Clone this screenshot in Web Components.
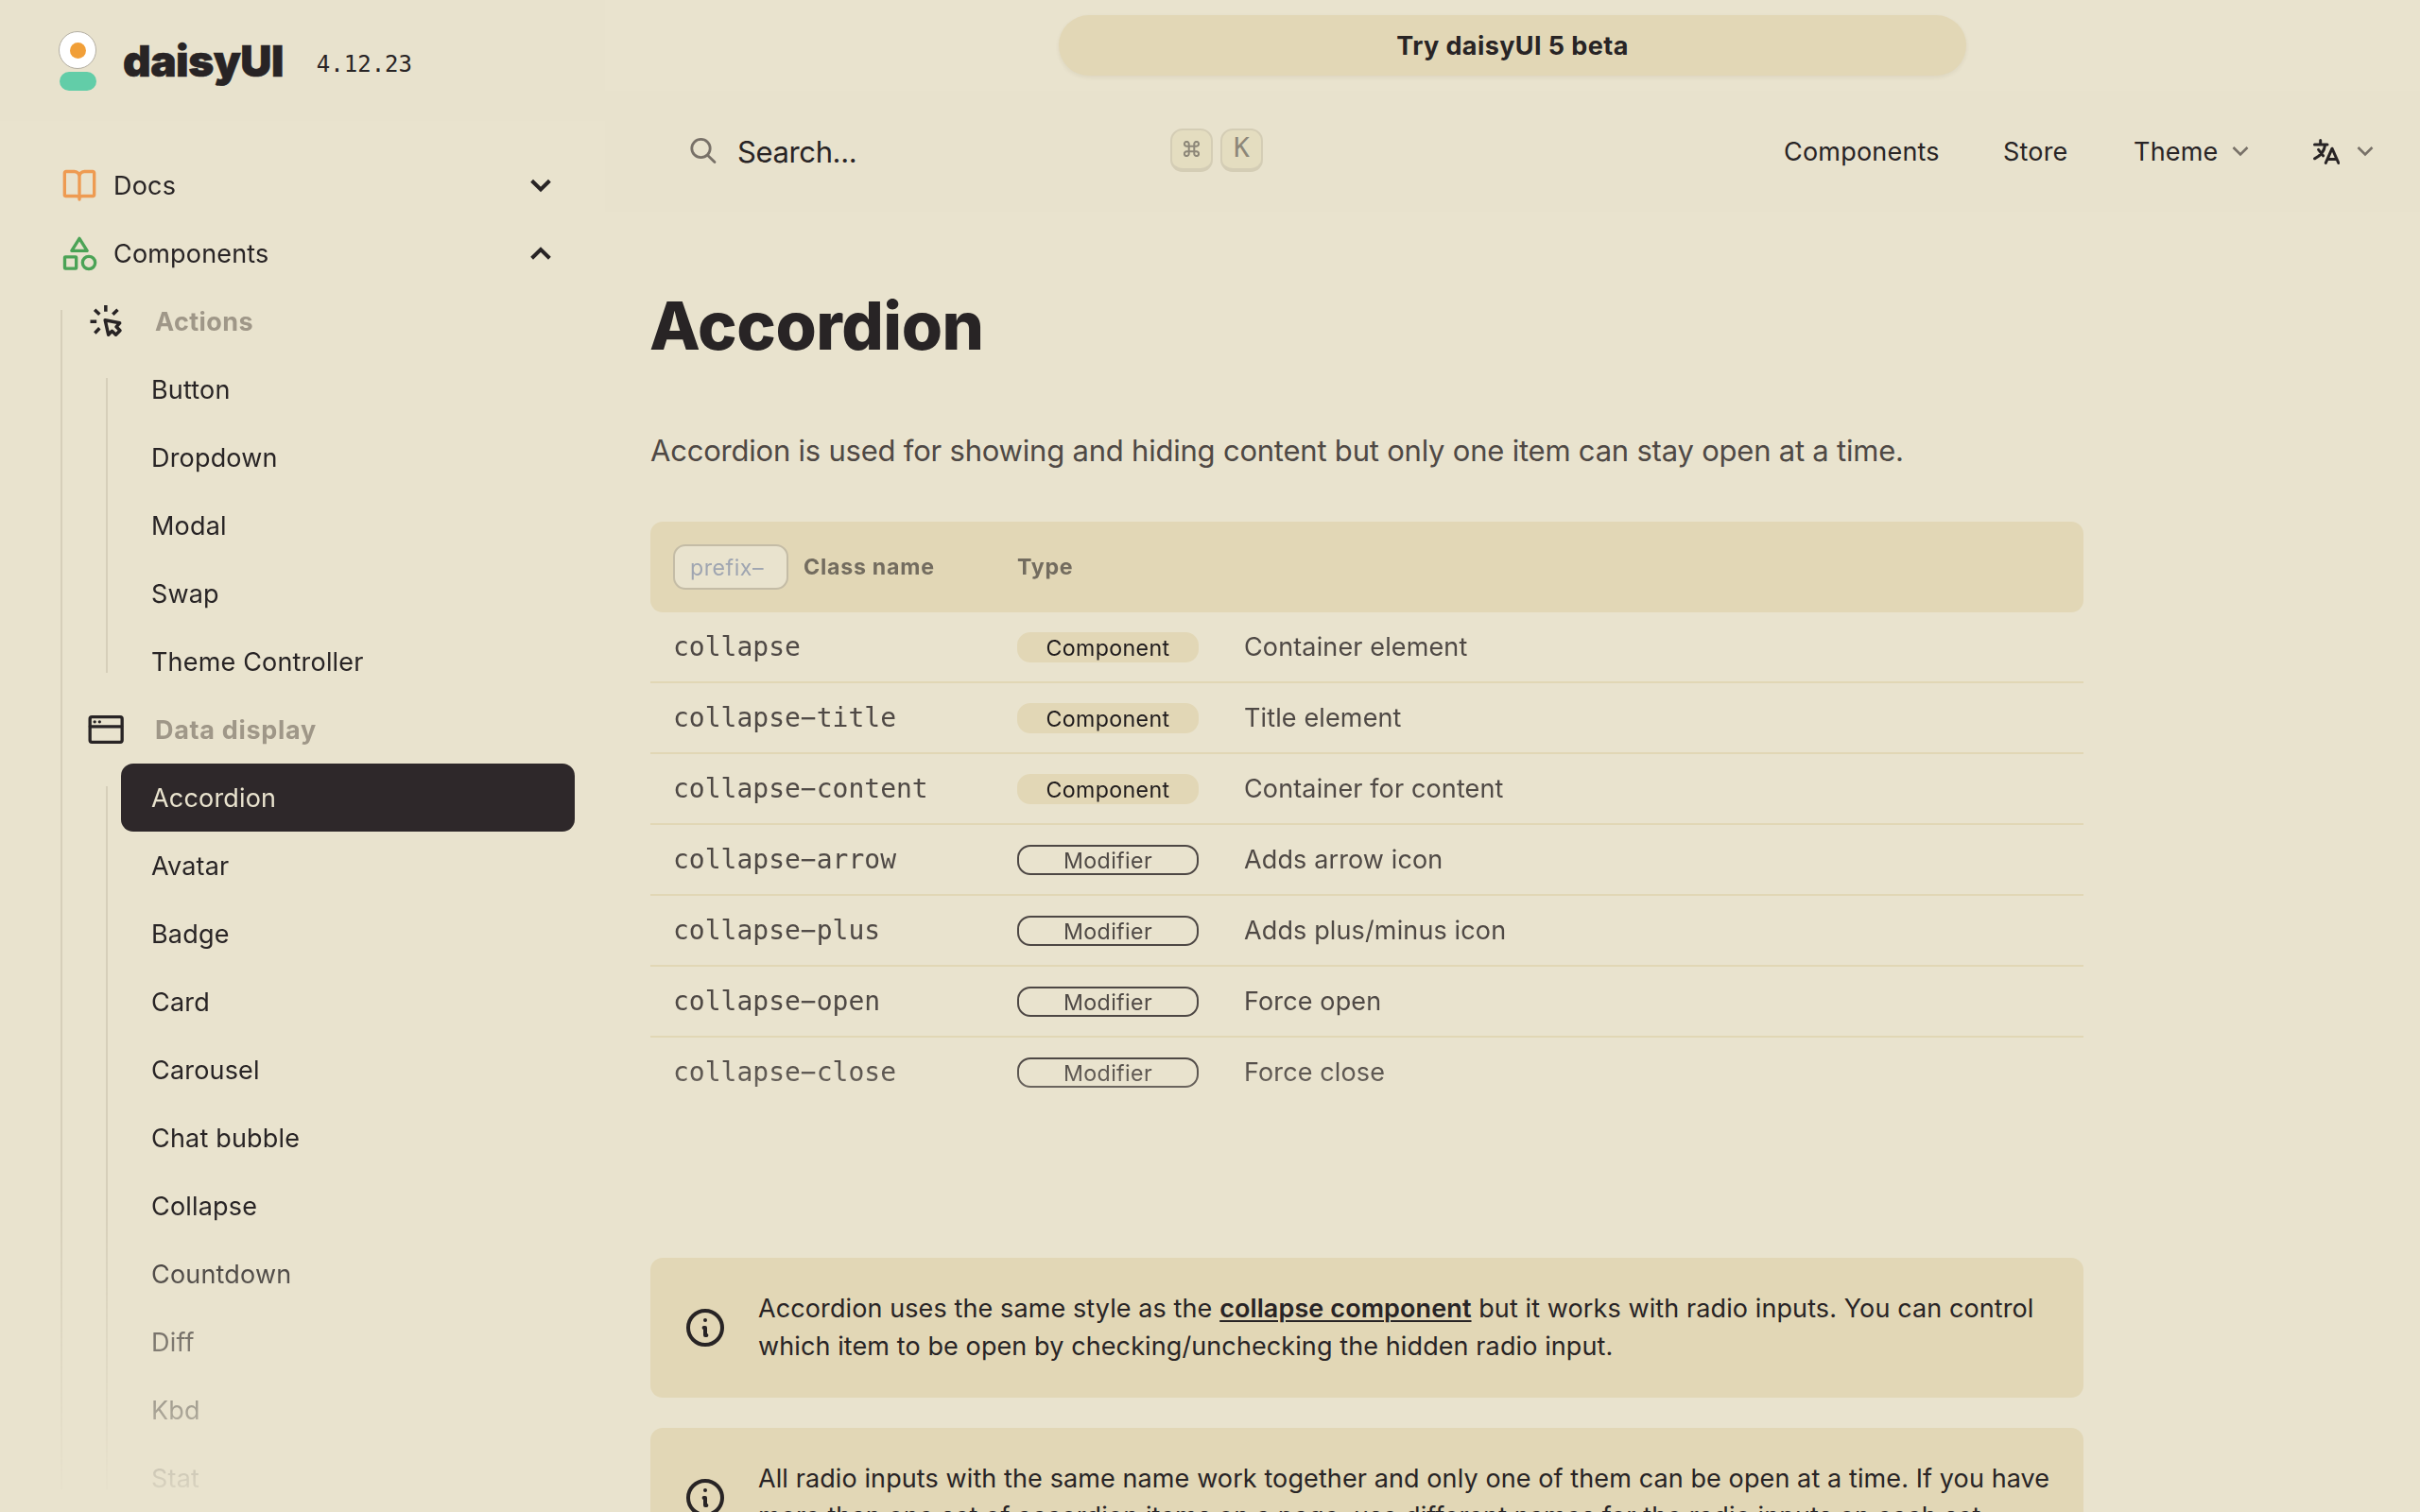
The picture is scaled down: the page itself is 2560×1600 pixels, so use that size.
<!DOCTYPE html>
<html lang="en">
<head>
<meta charset="utf-8">
<title>Accordion — daisyUI</title>
<style>
  html { --base-100:#e9e3ce; --bar:#e8e2cd; --base-200:#e2d7b6; --ink:#282425; --soft:#4f4945; --line:#d6cfba;
    --sans:Inter,"Liberation Sans",sans-serif; --mono:"DejaVu Sans Mono",monospace; }
  body { margin:0; width:2560px; height:1600px; overflow:hidden; background:var(--base-100);
    color:var(--ink); font:400 27px/40px var(--sans); letter-spacing:.13px; }
</style>
</head>
<body>
<docs-page>
  <docs-brand slot="side" version="4.12.23">daisyUI</docs-brand>
  <side-menu slot="side">
    <menu-item icon="book" chevron="down">Docs</menu-item>
    <menu-item icon="shapes" chevron="up">Components</menu-item>
    <menu-tree>
      <menu-title icon="click">Actions</menu-title>
      <menu-tree>
        <menu-item>Button</menu-item>
        <menu-item>Dropdown</menu-item>
        <menu-item>Modal</menu-item>
        <menu-item>Swap</menu-item>
        <menu-item>Theme Controller</menu-item>
      </menu-tree>
      <menu-title icon="window" style="letter-spacing:.7px">Data display</menu-title>
      <menu-tree>
        <menu-item active>Accordion</menu-item>
        <menu-item>Avatar</menu-item>
        <menu-item>Badge</menu-item>
        <menu-item>Card</menu-item>
        <menu-item>Carousel</menu-item>
        <menu-item>Chat bubble</menu-item>
        <menu-item>Collapse</menu-item>
        <menu-item>Countdown</menu-item>
        <menu-item>Diff</menu-item>
        <menu-item>Kbd</menu-item>
        <menu-item>Stat</menu-item>
      </menu-tree>
    </menu-tree>
  </side-menu>
  <top-banner>Try daisyUI 5 beta</top-banner>
  <nav-bar></nav-bar>
  <doc-article heading="Accordion">
    <span slot="lead">Accordion is used for showing and hiding content but only one item can stay open at a time.</span>
    <class-table>
      <class-row name="collapse" type="Component">Container element</class-row>
      <class-row name="collapse−title" type="Component">Title element</class-row>
      <class-row name="collapse−content" type="Component">Container for content</class-row>
      <class-row name="collapse−arrow" type="Modifier">Adds arrow icon</class-row>
      <class-row name="collapse−plus" type="Modifier">Adds plus/minus icon</class-row>
      <class-row name="collapse−open" type="Modifier">Force open</class-row>
      <class-row name="collapse−close" type="Modifier">Force close</class-row>
    </class-table>
    <info-alert>Accordion uses the same style as the <a>collapse component</a> but it works with radio inputs. You can control<br>which item to be open by checking/unchecking the hidden radio input.</info-alert>
    <info-alert>All radio inputs with the same name work together and only one of them can be open at a time. If you have<br>more than one set of accordion items on a page, use different names for the radio inputs on each set.</info-alert>
  </doc-article>
</docs-page>
<script>
const define = (name, render) => customElements.define(name, class extends HTMLElement {
  constructor() { super(); this.attachShadow({ mode: 'open' }); }
  connectedCallback() { this.shadowRoot.innerHTML = render(this); }
});

const icons = {
  book: '<g stroke="#ee9b52" stroke-width="2"><path d="M12 6.2V21M2.6 18.6V4.2a.9.9 0 0 1 .9-.9h5A3.3 3.3 0 0 1 12 6.4 3.3 3.3 0 0 1 15.5 3.3h5a.9.9 0 0 1 .9.9V18a.9.9 0 0 1-.9.9h-6.3c-1 0-2.2.2-2.2 1.1 0-.9-1.2-1.1-2.2-1.1H3.5a.9.9 0 0 1-.9-.9Z"/></g>',
  shapes: '<g stroke="#4ba356" stroke-width="2"><path d="M12 2.6 16.9 10.4H7.1Z"/><rect x="2.7" y="14.3" width="7.3" height="7.4" rx=".4"/><circle cx="18" cy="18" r="4"/></g>',
  click: '<g stroke="#282425" stroke-width="2.1" stroke-linecap="butt"><path d="M11.9 1.8v4M19.5 4.6l-3.1 3M4.9 4.6l3.1 3.1M2.1 12.1h4M8 16.4l-3 3.1"/><path d="M11.5 11.2 20.8 13.1 18.6 15.5 21 17.8 18.3 20.5 15.9 18.2 13.6 20.5Z"/></g>',
  window: '<g stroke="#282425" stroke-width="2"><rect x="1.9" y="4" width="20.4" height="16" rx="1.2"/><path d="M2 10.1h20" /></g><g fill="#282425"><circle cx="4.9" cy="7.1" r="1"/><circle cx="8" cy="7.1" r="1"/></g>'
};
const icon = n => `<svg class="icon" viewBox="0 0 24 24" width="40" height="40" fill="none" stroke-linejoin="round" stroke-linecap="round">${icons[n]}</svg>`;

define('docs-page', () => `<style>
  :host { display:flex; width:2560px; height:1600px; overflow:hidden }
  aside { flex:0 0 640px; height:1600px; overflow:hidden; -webkit-mask-image:linear-gradient(#000 1280px,transparent 1600px); mask-image:linear-gradient(#000 1280px,transparent 1600px) }
  main { flex:1; min-width:0; display:flex; flex-direction:column; height:1600px; overflow:hidden }
</style><aside><slot name="side"></slot></aside><main><slot></slot></main>`);

define('docs-brand', e => `<style>
  :host { display:flex; align-items:center; height:128px; padding-left:62px; box-sizing:border-box; background:var(--bar) }
  .mark { display:flex; flex-direction:column; align-items:center; gap:3px; margin-right:28px; padding-top:1px }
  .egg { width:40px; height:40px; box-sizing:border-box; border:1px solid #b3aea2; border-radius:50%; background:#fff; display:grid; place-items:center }
  .egg i { width:17px; height:17px; border-radius:50%; background:#f19f38 }
  .base { width:39px; height:20px; border-radius:10px; background:#62cda8 }
  b { font-weight:900; font-size:46px; letter-spacing:-.54px; -webkit-text-stroke:.6px var(--ink) }
  .v { font:24px/32px var(--mono); letter-spacing:0; margin-left:35px; padding-top:7px }
</style><div class="mark"><div class="egg"><i></i></div><div class="base"></div></div><b><slot></slot></b><span class="v">${e.getAttribute('version')}</span>`);

define('side-menu', () => `<style>:host { display:block; padding:32px 32px 0 }</style><slot></slot>`);

define('menu-tree', () => `<style>
  :host { display:flex; margin-left:32px }
  :host::before { content:""; flex:0 0 2px; margin:24px 0; background:var(--line) }
  div { flex:1; padding-left:14px }
</style><div><slot></slot></div>`);

define('menu-item', e => {
  const ic = e.getAttribute('icon'), ch = e.getAttribute('chevron');
  return `<style>
  :host { display:flex; align-items:center; height:72px; box-sizing:border-box; padding:0 ${ch ? 24 : 32}px 0 32px; border-radius:13px; letter-spacing:.18px }
  :host([active]) { background:#2e282a; color:var(--base-100) }
  span { padding-top:1px }
  .icon { margin-right:16px } .chev { margin-left:auto }
  </style>${ic ? icon(ic) : ''}<span><slot></slot></span>${ch ? `<svg class="chev" width="24" height="16" viewBox="0 0 24 16" fill="none" stroke="#282425" stroke-width="4" ><path d="${ch === 'down' ? 'M2.6 3.2 12 12.4 21.4 3.2' : 'M2.6 13.2 12 4 21.4 13.2'}"/></svg>` : ''}`;
});

define('menu-title', e => `<style>
  :host { display:flex; align-items:center; height:72px; padding-left:12px; font-weight:700; letter-spacing:.4px; color:#9f9788 }
  span { padding-top:1px }
  .icon { margin-right:32px }
</style>${icon(e.getAttribute('icon'))}<span><slot></slot></span>`);

define('top-banner', () => `<style>
  :host { flex:0 0 96px; display:flex; justify-content:center; align-items:center }
  div { width:960px; height:64px; border-radius:32px; background:var(--base-200); box-shadow:0 2px 4px rgba(90,70,20,.08); text-align:center; font-weight:700; line-height:65px; letter-spacing:.41px }
</style><div><slot></slot></div>`);

define('nav-bar', () => {
  const chev = '<svg class="c" width="18" height="12" viewBox="0 0 18 12" fill="none" stroke="#787168" stroke-width="2.6"><path d="M1.5 2 9 9.4 16.5 2"/></svg>';
  return `<style>
  :host { flex:0 0 128px; display:flex; align-items:center; background:var(--bar); padding:0 49px 0 89px }
  .find { display:flex; align-items:center; width:607px; font-size:31px; letter-spacing:-.38px }
  .glass { margin-right:21px }
  .find span { flex:1; padding-top:1px }
  kbd { display:grid; place-items:center; box-sizing:border-box; width:45px; height:46px; margin:0 0 2px 8px; border:2px solid #d4cdb5; border-bottom-width:4px; border-radius:13px; background:#e4ddc0; color:#8d8779; font:28px/32px var(--mono); letter-spacing:0; padding-bottom:2px }
  nav { margin-left:auto; display:flex; align-items:center; letter-spacing:.2px }
  nav span { padding-top:1px }
  nav .a { width:232px } nav .b { width:138px } nav .t { width:104px }
  .c { display:block } .lang { margin:0 18px 0 68px }
</style>
<div class="find"><svg class="glass" width="30" height="30" viewBox="0 0 30 30" fill="none" stroke="#787168" stroke-width="2.8" stroke-linecap="round"><circle cx="12.5" cy="12" r="9.7"/><path d="M19.5 19.2 27 26.6"/></svg><span>Search...</span>
<kbd><svg width="17" height="17" viewBox="0 0 17 17" fill="none" stroke="#8d8779" stroke-width="2"><path d="M5.7 5.7H3.3A2.4 2.4 0 1 1 5.7 3.3V13.7A2.4 2.4 0 1 1 3.3 11.3H13.7A2.4 2.4 0 1 1 11.3 13.7V3.3A2.4 2.4 0 1 1 13.7 5.7Z"/></svg></kbd><kbd>K</kbd></div>
<nav><span class="a">Components</span><span class="b">Store</span><span class="t">Theme</span>${chev}
<svg class="lang" width="28" height="28" viewBox="0 0 28 28" fill="none" stroke="#282425" stroke-width="3" stroke-linecap="round" stroke-linejoin="round"><path d="M7.7 2.5v4M1.5 7H15M12.6 7.5C11.8 13.5 7.5 19 1.6 21.8M5.6 12.4 10.6 18.8M13.3 26.4 20 11.2 26.8 26.4M15.5 22.4H24.5"/></svg>${chev}</nav>`;
});

define('doc-article', e => `<style>
  :host { display:block; margin:0 356px 0 48px }
  h1 { margin:77px 0 0; font-size:70px; line-height:88px; font-weight:800; letter-spacing:-.5px; text-indent:-1px }
  p { margin:68px 0 0; font-size:31px; line-height:40px; letter-spacing:-.215px; color:var(--soft) }
</style><h1>${e.getAttribute('heading')}</h1><p><slot name="lead"></slot></p><slot></slot>`);

define('class-table', () => `<style>
  :host { display:block; margin:55px 0 158px; -webkit-mask-image:linear-gradient(#000 568px,transparent 728px); mask-image:linear-gradient(#000 568px,transparent 728px) }
  header { display:flex; align-items:center; height:96px; padding-left:24px; border-radius:13px; background:var(--base-200); font-size:23.2px; font-weight:700; letter-spacing:.75px; color:#736c5f }
  header span { line-height:42px }
  header .in { box-sizing:border-box; width:122px; height:48px; margin-right:16px; padding-left:16px; line-height:46px; border:2px solid #c4bca6; border-radius:13px; background:var(--base-100); color:#9fa5b1; font-weight:400; letter-spacing:.5px }
  .n { width:226px }
</style><header><span class="in">prefix–</span><span class="n">Class name</span><span>Type</span></header><slot></slot>`);

define('class-row', e => {
  const t = e.getAttribute('type');
  return `<style>
  :host { display:flex; align-items:center; box-sizing:border-box; height:75px; padding-left:24px; border-bottom:2px solid #e1d7b5; color:var(--soft) }
  :host(:last-of-type) { border-bottom-color:transparent }
  code { width:364px; font:28px/40px var(--mono); letter-spacing:0 }
  .p { box-sizing:border-box; width:192px; height:32px; margin-right:48px; border-radius:14px; text-align:center; font-size:23.2px; line-height:30px; letter-spacing:.36px; border:2px solid }
  .Component { background:var(--base-200); border-color:var(--base-200); color:#1f1b1c }
  .Modifier { border-color:#4d4744 }
</style><code>${e.getAttribute('name')}</code><span class="p ${t}">${t}</span><span><slot></slot></span>`;
});

define('info-alert', () => `<style>
  :host { display:flex; align-items:center; box-sizing:border-box; height:148px; margin-bottom:32px; padding-left:34px; border-radius:13px; background:var(--base-200); white-space:nowrap; letter-spacing:.1px }
  svg { flex:none; margin-right:32px }
  ::slotted(a) { font-weight:600; text-decoration:underline; text-decoration-thickness:2px; text-underline-offset:3px }
</style><svg width="48" height="48" viewBox="0 0 24 24" fill="none" stroke="#282425" stroke-width="2" stroke-linecap="round" stroke-linejoin="round"><circle cx="12" cy="12" r="9"/><path d="M12 8h.01M11.3 12H12v4h.7"/></svg><div><slot></slot></div>`);
</script>
</body>
</html>
